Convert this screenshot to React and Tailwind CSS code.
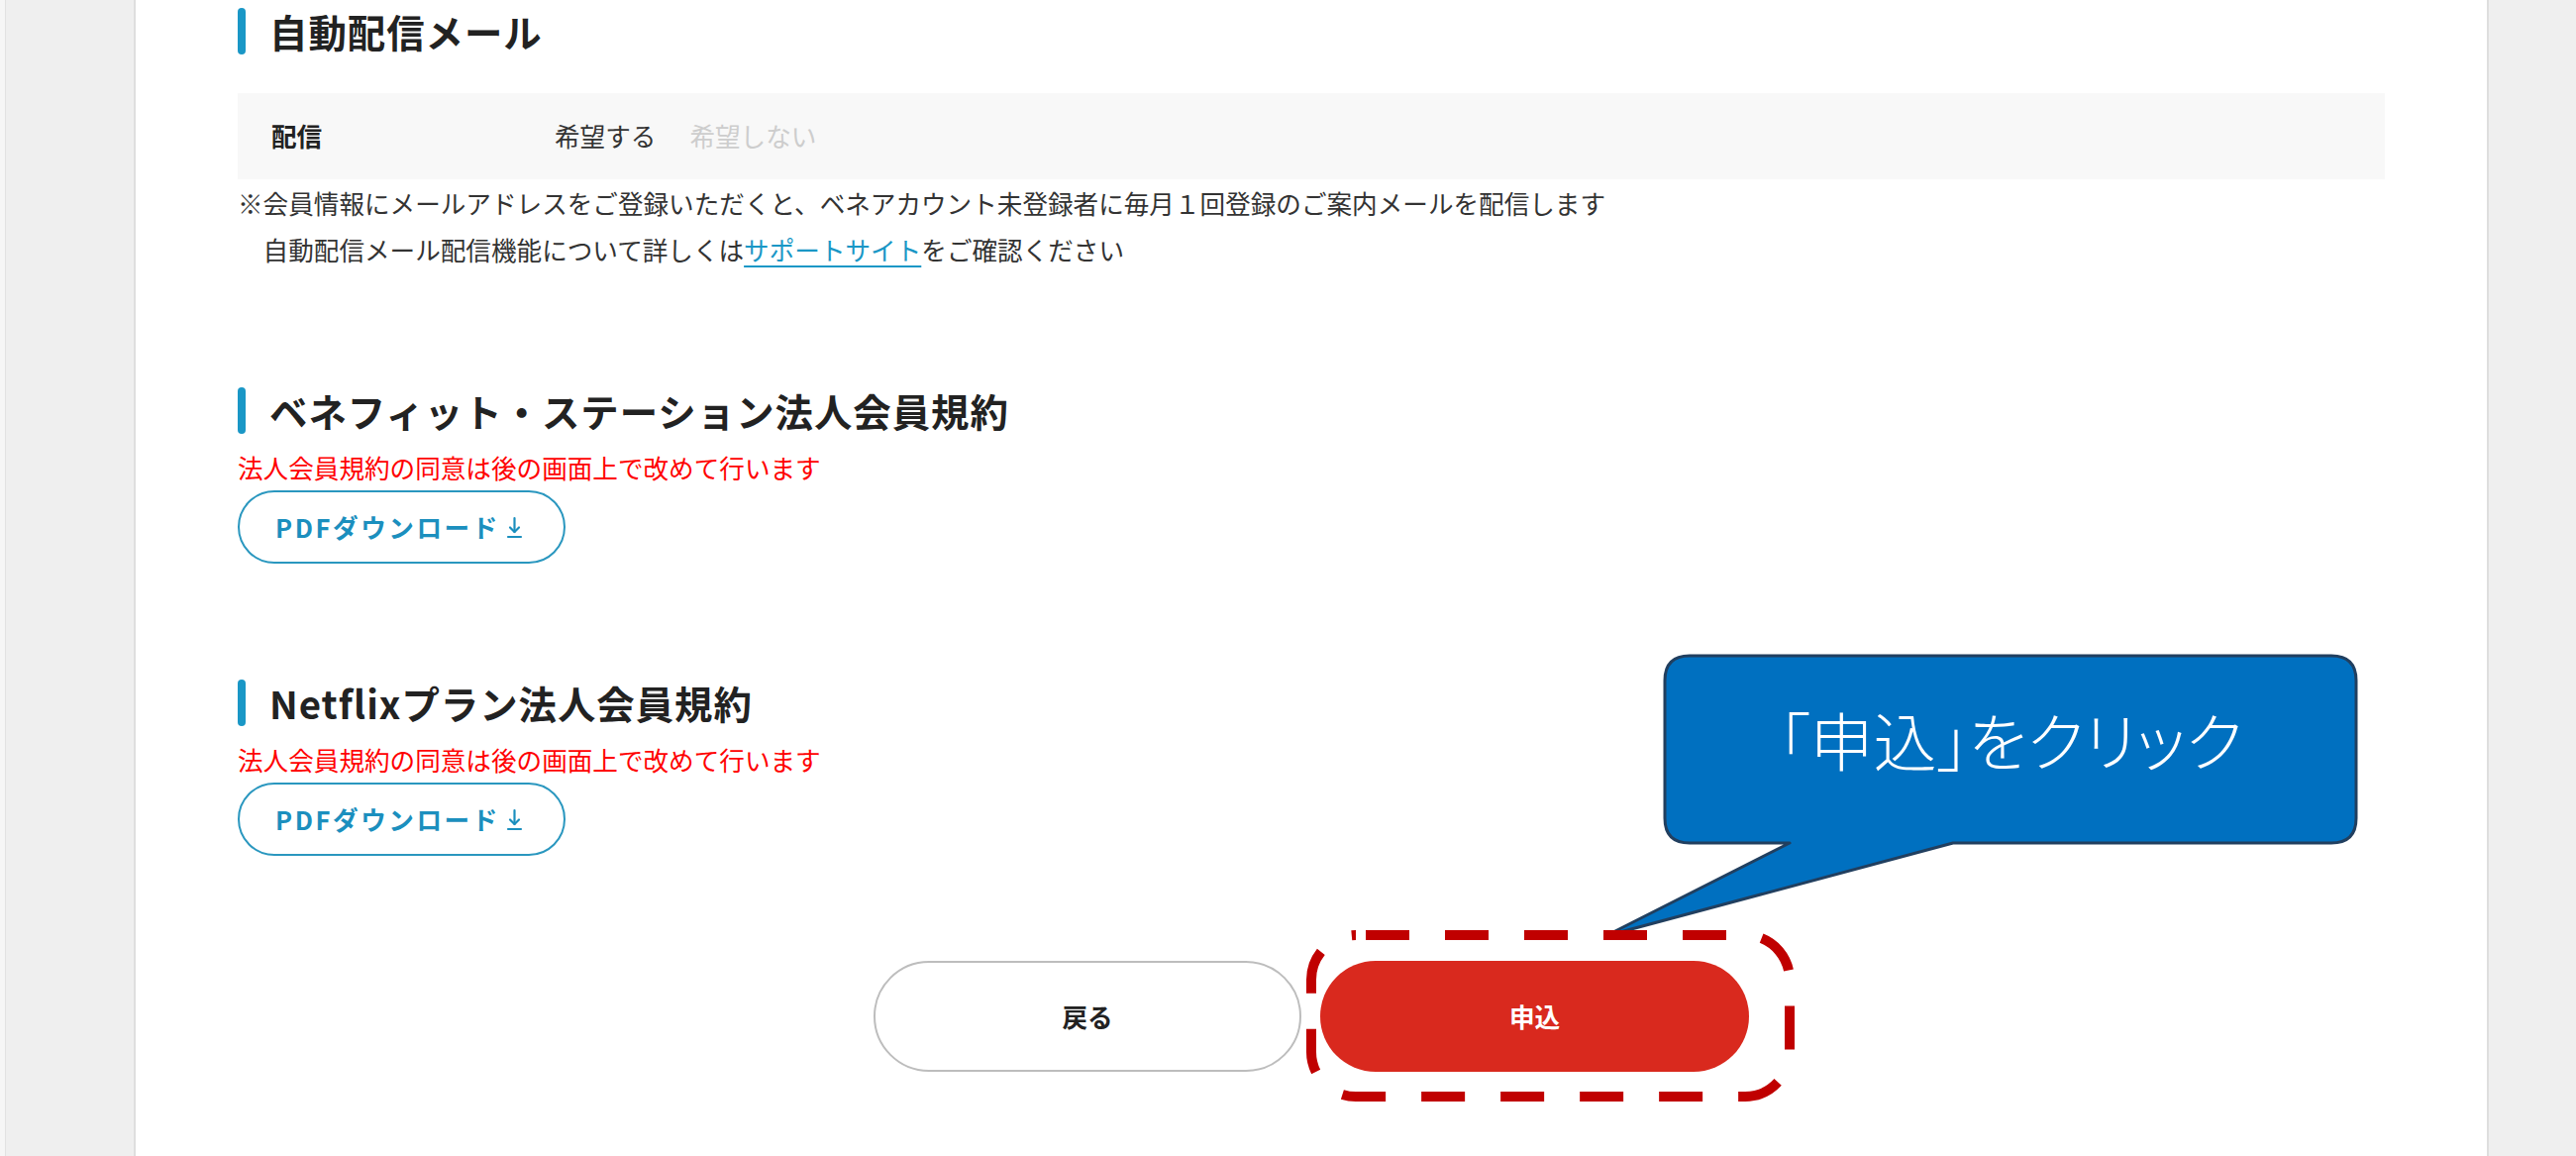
import React from "react";

function SectionHeading({ children }) {
  return (
    <div className="flex items-center h-[47px]">
      <div className="w-[8px] h-[47px] rounded-full bg-[#1a97c6]" />
      <h2 className="ml-[24px] text-[38.4px] font-bold text-[#222] tracking-[1px] leading-none">
        {children}
      </h2>
    </div>
  );
}

function DownloadIcon() {
  return (
    <svg width="17" height="24" viewBox="0 0 17 24" fill="none" stroke="currentColor" strokeWidth="2.2" strokeLinecap="round" strokeLinejoin="round">
      <path d="M8.5 3v14" />
      <path d="M4 12.5L8.5 17l4.5-4.5" />
      <path d="M2 22h13" />
    </svg>
  );
}

function PdfButton() {
  return (
    <button className="flex items-center w-[331px] h-[74px] pl-[36px] rounded-full border-2 border-[#2a97bf] bg-white text-[#1b8fbe] text-[25.6px] font-bold">
      <span className="tracking-[0.1em]">PDFダウンロード</span>
      <span className="ml-[6px] flex items-center">
        <DownloadIcon />
      </span>
    </button>
  );
}

function TermsSection({ title }) {
  return (
    <div>
      <SectionHeading>{title}</SectionHeading>
      <p className="mt-[15px] text-[25.6px] leading-[38px] text-[#ff0000]">
        法人会員規約の同意は後の画面上で改めて行います
      </p>
      <div className="mt-[4px]">
        <PdfButton />
      </div>
    </div>
  );
}

function Callout() {
  return (
    <>
      <svg
        className="absolute left-0 top-0 pointer-events-none"
        width="2601"
        height="1167"
        viewBox="0 0 2601 1167"
      >
        <path
          d="M1706 662 H2354 Q2379 662 2379 687 V826 Q2379 851 2354 851 H1972 L1621 945 L1807 851 H1706 Q1681 851 1681 826 V687 Q1681 662 1706 662 Z"
          fill="#0070c0"
          stroke="#213f5f"
          strokeWidth="3"
          strokeLinejoin="round"
        />
        <rect
          x="1324"
          y="944"
          width="483"
          height="163"
          rx="45"
          fill="none"
          stroke="#c00000"
          strokeWidth="10"
          strokeDasharray="44 36"
          strokeDashoffset="-10"
        />
      </svg>
      <div className="absolute left-[1681px] top-[702px] w-[698px] flex justify-center pointer-events-none">
        <span className="text-white text-[64px] font-light leading-[86px] [font-feature-settings:'palt']">
          「申込」をクリック
        </span>
      </div>
    </>
  );
}

export default function App() {
  return (
    <div className="relative w-[2601px] h-[1167px] overflow-hidden bg-[#efefef] font-['Noto_Sans_CJK_JP','Noto_Sans',sans-serif] text-[#333]">
      <div className="flex h-full">
        <div className="w-[6px] bg-[#f6f6f6] border-r border-[#e2e2e2]" />
        <div className="w-[129px]" />
        <div className="flex-1 bg-white border-x-2 border-[#dedede] px-[103px]">
          {/* 自動配信メール */}
          <div className="pt-[8px]">
            <SectionHeading>自動配信メール</SectionHeading>
            <div className="mt-[39px] h-[87px] bg-[#f8f8f8] flex items-center pl-[34px] text-[25.6px]">
              <div className="w-[286px] font-bold text-[#222]">配信</div>
              <div className="flex gap-[34px]">
                <span className="text-[#333]">希望する</span>
                <span className="text-[#cdcdcd]">希望しない</span>
              </div>
            </div>
            <div className="text-[25.6px] leading-[47px] text-[#333]">
              <p>
                ※会員情報にメールアドレスをご登録いただくと、ベネアカウント未登録者に毎月１回登録のご案内メールを配信します
              </p>
              <p className="pl-[25.6px]">
                自動配信メール配信機能について詳しくは
                <a href="#" className="text-[#1a97c6] underline underline-offset-[5px]">
                  サポートサイト
                </a>
                をご確認ください
              </p>
            </div>
          </div>

          <div className="mt-[116px]">
            <TermsSection title="ベネフィット・ステーション法人会員規約" />
          </div>

          <div className="mt-[117px]">
            <TermsSection title="Netflixプラン法人会員規約" />
          </div>

          <div className="mt-[106px] flex justify-center gap-[19px]">
            <button className="w-[432px] h-[112px] rounded-full border-2 border-[#bdbdbd] bg-white text-[25.6px] font-bold text-[#222]">
              戻る
            </button>
            <button className="w-[433px] h-[112px] rounded-full bg-[#d9291e] text-[25.6px] font-bold text-white">
              申込
            </button>
          </div>
        </div>
        <div className="w-[88px]" />
      </div>
      <Callout />
    </div>
  );
}
